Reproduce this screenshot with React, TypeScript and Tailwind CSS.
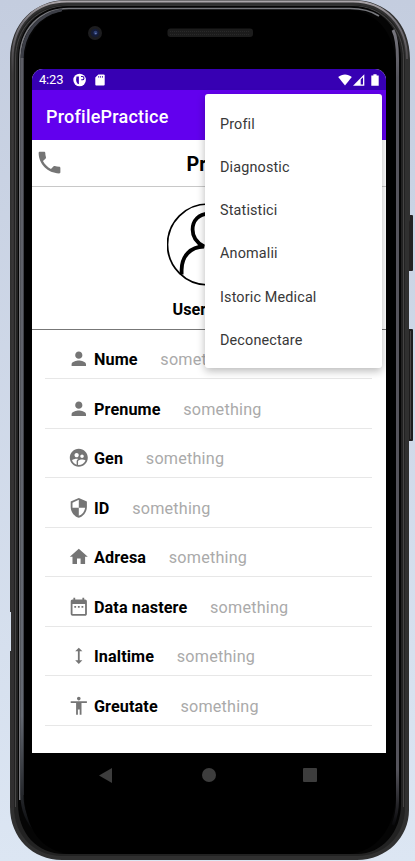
import React from "react";
import type { IconType } from "react-icons";
import {
  MdAccessibility,
  MdDateRange,
  MdHeight,
  MdHome,
  MdPerson,
  MdPhone,
  MdSecurity,
  MdSupervisedUserCircle,
} from "react-icons/md";

const menuItems = ["Profil", "Diagnostic", "Statistici", "Anomalii", "Istoric Medical", "Deconectare"];

const fields: { icon: IconType; label: string; value: string }[] = [
  { icon: MdPerson, label: "Nume", value: "something" },
  { icon: MdPerson, label: "Prenume", value: "something" },
  { icon: MdSupervisedUserCircle, label: "Gen", value: "something" },
  { icon: MdSecurity, label: "ID", value: "something" },
  { icon: MdHome, label: "Adresa", value: "something" },
  { icon: MdDateRange, label: "Data nastere", value: "something" },
  { icon: MdHeight, label: "Inaltime", value: "something" },
  { icon: MdAccessibility, label: "Greutate", value: "something" },
];

/* Metal rim, glass edge, camera, speaker and side buttons of the handset. */
function Handset() {
  return (
    <svg className="pointer-events-none absolute inset-0" width="415" height="861" viewBox="0 0 415 861" fill="none">
      <defs>
        <linearGradient id="rim" x1="0" y1="0" x2="0" y2="1">
          <stop offset="0" stopColor="#aaa5a9" />
          <stop offset="0.025" stopColor="#77747a" />
          <stop offset="0.09" stopColor="#3c3a3b" />
          <stop offset="1" stopColor="#302e2f" />
        </linearGradient>
        <linearGradient id="glassLeft" x1="0" y1="0" x2="0" y2="1">
          <stop offset="0" stopColor="#5c5d65" />
          <stop offset="0.85" stopColor="#646972" />
          <stop offset="1" stopColor="#08090b" />
        </linearGradient>
        <linearGradient id="glassRight" x1="0" y1="0" x2="0" y2="1">
          <stop offset="0" stopColor="#77767e" />
          <stop offset="0.06" stopColor="#55545c" />
          <stop offset="0.93" stopColor="#55545c" />
          <stop offset="1" stopColor="#09090b" />
        </linearGradient>
      </defs>
      <rect x="407" y="215" width="6" height="56" rx="1" fill="#242222" />
      <rect x="407" y="329" width="6" height="112" rx="1" fill="#1d1c1c" />
      <path d="M410.5 331V439" stroke="#484646" />
      <path
        d="M10 59C10 23 35 0 67 0H353C386 0 410 23 410 59V220L409 222V810C409 837 387 860 357 860H62C33 860 10 838 10 807V651H11V612H10Z"
        fill="#303030"
      />
      <path d="M12.5 808V59C12.5 23 35 1.5 67 1.5H353C384 1.5 407 24 407 59" stroke="url(#rim)" strokeWidth="2" />
      <path d="M14 807V59C14 25 37 5 67 5H353C383 5 405 26 405 59V808C405 836 384 856 357 856H62C35 856 14 836 14 807Z" fill="#222222" />
      <path d="M15.5 807V59C15.5 27 38 6 68 6H353C382 6 403.5 28 403.5 59V807" stroke="#454444" />
      <path d="M18 804V60C18 27 39 6 68 6H352C381 6 401 28 401 60V804C401 832 382 854 357 854H64C37 854 18 833 18 804Z" fill="#050505" />
      <path d="M19.8 800V60C19.8 29 40 8.5 69 8.5H350C363 8.5 373 12 379 16" stroke="#77787d" strokeWidth="1.6" />
      <path d="M22 795V60C22 34 38 14 62 10" stroke="#3c3e46" strokeWidth="3" />
      <path d="M22 58V795C22 812 28 823 37 832" stroke="url(#glassLeft)" strokeWidth="3" />
      <path d="M393 30C397 38 397.5 48 397.5 59V801C397.5 809 396 817 393 825" stroke="url(#glassRight)" strokeWidth="3" />
      <path d="M24 790V66C25 34 41 14 69 10H351C378 12 395 35 396 66V790C396 830 375 852 349 854H70C43 852 24 830 24 790Z" fill="#000" />
      <circle cx="95" cy="33" r="7" fill="#1d1d1f" />
      <circle cx="95.2" cy="33" r="4.3" fill="#151c36" />
      <circle cx="95.5" cy="32.8" r="2" fill="#2d3f73" />
      <circle cx="95.8" cy="33.5" r="0.8" fill="#7080b4" />
      <rect x="167.5" y="28.5" width="85.5" height="8.5" rx="3" fill="#1c1c1c" />
      <path d="M170 31.5H250M170 34.5H250" stroke="#292929" strokeDasharray="1 1" />
    </svg>
  );
}

function StatusBar() {
  return (
    <div className="flex h-[21px] shrink-0 items-center bg-[#3700b3] pl-[7px] pr-[7px] text-white">
      <span className="w-[25px] text-[13px] leading-none tracking-[-0.2px]">4:23</span>
      <svg className="ml-[9px]" width="14" height="14" viewBox="0 0 14 14">
        <circle cx="6.6" cy="7" r="6.3" fill="#fff" />
        <path d="M3.5 3.4H5.9V10.9H4.9Q3.1 9.4 3.1 7Z" fill="#3700b3" />
        <path d="M8 3.5H9.3A1.5 1.5 0 0 1 9.3 6.8H8.2" stroke="#3700b3" strokeWidth="1.1" fill="none" />
      </svg>
      <svg className="ml-[7.5px]" width="10" height="12" viewBox="0 0 10 12">
        <path d="M3.4 .4H8.7Q9.7 .4 9.7 1.4V10.6Q9.7 11.5 8.7 11.5H1.2Q.3 11.5 .3 10.6V3.5Z" fill="#fff" />
        <path d="M3.7 2V3.7M5.6 2V3.7M7.5 2V3.7" stroke="#3700b3" strokeWidth="0.8" />
      </svg>
      <div className="ml-auto flex items-center">
        <svg width="14" height="12" viewBox="0 0 14 12">
          <path d="M.2 3C4.1-.4 9.9-.4 13.8 3L7 11.5Z" fill="#fff" />
        </svg>
        <svg className="ml-px" width="12" height="12" viewBox="0 0 12 12">
          <path d="M0 11.7L11.3 .2V11.7Z" fill="#fff" />
          <path d="M7.7 5.5L10 3.2V10.5H7.7Z" fill="#3700b3" />
        </svg>
        <svg className="ml-[6px]" width="8" height="12" viewBox="0 0 8 12">
          <path d="M2.4 .3H5.6V1.5H7.7V11.7H.3V1.5H2.4Z" fill="#fff" />
        </svg>
      </div>
    </div>
  );
}

function Avatar() {
  return (
    <svg className="mx-auto mt-4 block" width="84" height="83" viewBox="0 0 84 83" fill="none" stroke="#000">
      <circle cx="41" cy="41.5" r="40.5" strokeWidth="1.7" />
      <path
        d="M14.6 71.5V67C14.6 53 23.5 43.8 37 43.5C29 39.5 25.6 33 25.6 26.5C25.6 17.5 32 10.8 41 10.8S56.4 17.5 56.4 26.5C56.4 33 53 39.5 45 43.5C58.5 43.8 67.4 53 67.4 67V71.5"
        strokeWidth="3.8"
      />
    </svg>
  );
}

function OverflowMenu() {
  return (
    <div className="absolute right-1 top-[25px] w-[177px] rounded-[3px] bg-white pb-[6px] pt-[9px] shadow-[0_3px_8px_rgba(0,0,0,0.28)]">
      {menuItems.map((item) => (
        <div key={item} className="flex h-[43.2px] items-center pl-[15px] text-[14.4px] tracking-[0.15px] text-[#383838]">
          {item}
        </div>
      ))}
    </div>
  );
}

export default function App() {
  return (
    <div className="relative flex h-[861px] w-[415px] flex-col overflow-hidden bg-linear-to-b from-[#c4cddf] to-[#dce6f3] font-[Roboto,sans-serif]">
      <Handset />
      <div className="relative ml-[32px] mt-[69px] flex h-[684px] w-[354px] flex-col rounded-t-[11px] bg-white">
        <div className="overflow-hidden rounded-t-[11px]">
          <StatusBar />
          <header className="flex h-[50px] items-center bg-[#6200ee] pl-[14px] pt-[3px]">
            <h1 className="text-[18px] font-medium leading-none tracking-[0.22px] text-white">ProfilePractice</h1>
          </header>
        </div>
        <div className="relative flex h-[47px] shrink-0 items-center border-b border-[#c8c8c8] pl-[154.5px] text-[19.8px] font-bold">
          <MdPhone className="absolute left-[3px] top-[8px] size-[29px] text-[#757575]" />
          <span className="pt-[3px]">Pr</span>
        </div>
        <section className="h-[143px] shrink-0 border-b border-[#777777]">
          <Avatar />
          <p className="mt-[13.5px] pl-[140.5px] text-[16.2px] font-bold leading-[20px]">User</p>
        </section>
        <ul className="-mt-[0.3px] pl-[13px] pr-[14px]">
          {fields.map(({ icon: Icon, label, value }) => (
            <li key={label} className="flex h-[49.5px] items-center border-b border-[#e7e7e7] pl-[22.5px] pt-[12.5px] text-[16.2px]">
              <Icon className="mb-[2.6px] size-[21.6px] shrink-0 text-[#757575]" />
              <span className="ml-[4.9px] font-bold tracking-[0.1px] text-black">{label}</span>
              <span className="ml-[22.7px] tracking-[0.2px] text-[#aaaaaa]">{value}</span>
            </li>
          ))}
        </ul>
        <OverflowMenu />
      </div>
      <nav className="relative ml-[32px] flex h-[44px] w-[354px] items-center pl-[67px] text-[#3d3d3d]">
        <svg width="13" height="15" viewBox="0 0 13 15" fill="currentColor">
          <path d="M0 7.5L13 0V15Z" />
        </svg>
        <div className="ml-[90px] size-[14px] rounded-full bg-[#3d3d3d]" />
        <div className="ml-[87px] size-[14px] rounded-[1px] bg-[#3d3d3d]" />
      </nav>
    </div>
  );
}
